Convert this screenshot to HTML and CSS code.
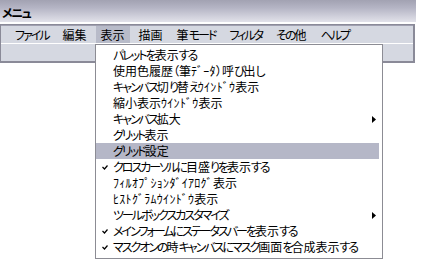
FILE: index.html
```html
<!DOCTYPE html>
<html lang="ja">
<head>
<meta charset="utf-8">
<link rel="stylesheet" href="styles.css">
</head>
<body>
<div class="window">
  <div class="titlebar"><span class="title">メニュ</span></div>
  <div class="frame">
    <div class="menubar">
      <span class="mi">ファイル</span>
      <span class="mi"><span class="k">編集</span></span>
      <span class="mi active"><span class="k">表示</span></span>
      <span class="mi"><span class="k">描画</span></span>
      <span class="mi"><span class="k">筆</span>モード</span>
      <span class="mi">フィルタ</span>
      <span class="mi">その<span class="k">他</span></span>
      <span class="mi">ヘルプ</span>
    </div>
    <div class="toolbar"></div>
  </div>
  <div class="dropdown">
    <div class="row">パレットを<span class="k">表示</span>する</div>
    <div class="row"><span class="k">使用色履歴（筆</span><span class="hw">ﾃﾞｰﾀ</span><span class="k">）呼</span>び<span class="k">出</span>し</div>
    <div class="row">キャンバス<span class="k">切</span>り<span class="k">替</span>え<span class="hw">ｳｲﾝﾄﾞｳ</span><span class="k">表示</span></div>
    <div class="row"><span class="k">縮小表示</span><span class="hw">ｳｲﾝﾄﾞｳ</span><span class="k">表示</span></div>
    <div class="row">キャンバス<span class="k">拡大</span><svg class="arrow" width="4" height="7" viewBox="0 0 4 7"><polygon points="0,0 4,3.5 0,7" fill="#000"/></svg></div>
    <div class="row">グリット<span class="k">表示</span></div>
    <div class="row hover">グリッド<span class="k">設定</span></div>
    <div class="row"><svg class="check" width="6" height="5" viewBox="0 0 6 5"><polyline points="0.5,2 2.5,4 5.5,0.5" fill="none" stroke="#000" stroke-width="1.2"/></svg>クロスカーソルに<span class="k">目盛</span>りを<span class="k">表示</span>する</div>
    <div class="row"><span class="hw">ﾌｨﾙｵﾌﾟｼｮﾝﾀﾞｲｱﾛｸﾞ</span><span class="k">表示</span></div>
    <div class="row"><span class="hw">ﾋｽﾄｸﾞﾗﾑｳｲﾝﾄﾞｳ</span><span class="k">表示</span></div>
    <div class="row">ツールボックスカスタマイズ<svg class="arrow" width="4" height="7" viewBox="0 0 4 7"><polygon points="0,0 4,3.5 0,7" fill="#000"/></svg></div>
    <div class="row"><svg class="check" width="6" height="5" viewBox="0 0 6 5"><polyline points="0.5,2 2.5,4 5.5,0.5" fill="none" stroke="#000" stroke-width="1.2"/></svg>メインフォームにステータスバーを<span class="k">表示</span>する</div>
    <div class="row"><svg class="check" width="6" height="5" viewBox="0 0 6 5"><polyline points="0.5,2 2.5,4 5.5,0.5" fill="none" stroke="#000" stroke-width="1.2"/></svg>マスクオンの<span class="k">時</span>キャンバスにマスク<span class="k">画面</span>を<span class="k">合成表示</span>する</div>
  </div>
</div>
</body>
</html>
```
FILE: styles.css
```css
* { box-sizing: border-box; }
html, body { margin: 0; padding: 0; background: #fff; }
body {
  width: 422px;
  height: 264px;
  overflow: hidden;
  font-family: "Noto Sans CJK JP", sans-serif;
  font-size: 12px;
  font-feature-settings: "palt";
  color: #000;
}
.window { position: relative; width: 422px; height: 264px; }
.titlebar {
  height: 23px;
  width: 416px;
  background: linear-gradient(#a2a2b2 0%, #b4b4c4 35%, #e2e2ea 100%);
  border-bottom: 1px solid #ffffff;
  display: flex;
  align-items: flex-end;
  padding: 0 0 2px 2px;
}
.title { font-weight: bold; line-height: 14px; letter-spacing: -1.5px; }
.frame {
  margin-top: 1px;
  width: 415px;
  border: 1px solid #8a8a98;
  border-right-width: 2px;
  border-bottom-width: 2px;
  background: #d5d8e1;
}
.menubar {
  height: 19px;
  display: flex;
  align-items: stretch;
  gap: 4px;
  padding-left: 9px;
  border-top: 1px solid #a0a0b0;
  border-bottom: 1px solid #ffffff;
  letter-spacing: -2px;
}
.mi { padding: 0 5px; line-height: 18px; }
.mi.active { background: #b8bbc9; }
.toolbar { height: 17px; }
.dropdown {
  position: absolute;
  left: 95px;
  top: 44px;
  width: 288px;
  height: 215px;
  background: #fff;
  border: 1px solid #8c8c94;
  padding: 2px 3px 2px 0;
}
.row {
  position: relative;
  height: 16px;
  line-height: 16px;
  padding-left: 17px;
  white-space: nowrap;
  letter-spacing: -2px;
}
.k { letter-spacing: 0; }
.hw { letter-spacing: 0.3px; font-feature-settings: normal; }
.row.hover { background: #b5b7c7; }
.check { position: absolute; left: 6px; top: 6px; }
.arrow { position: absolute; right: 3px; top: 5px; }
```
